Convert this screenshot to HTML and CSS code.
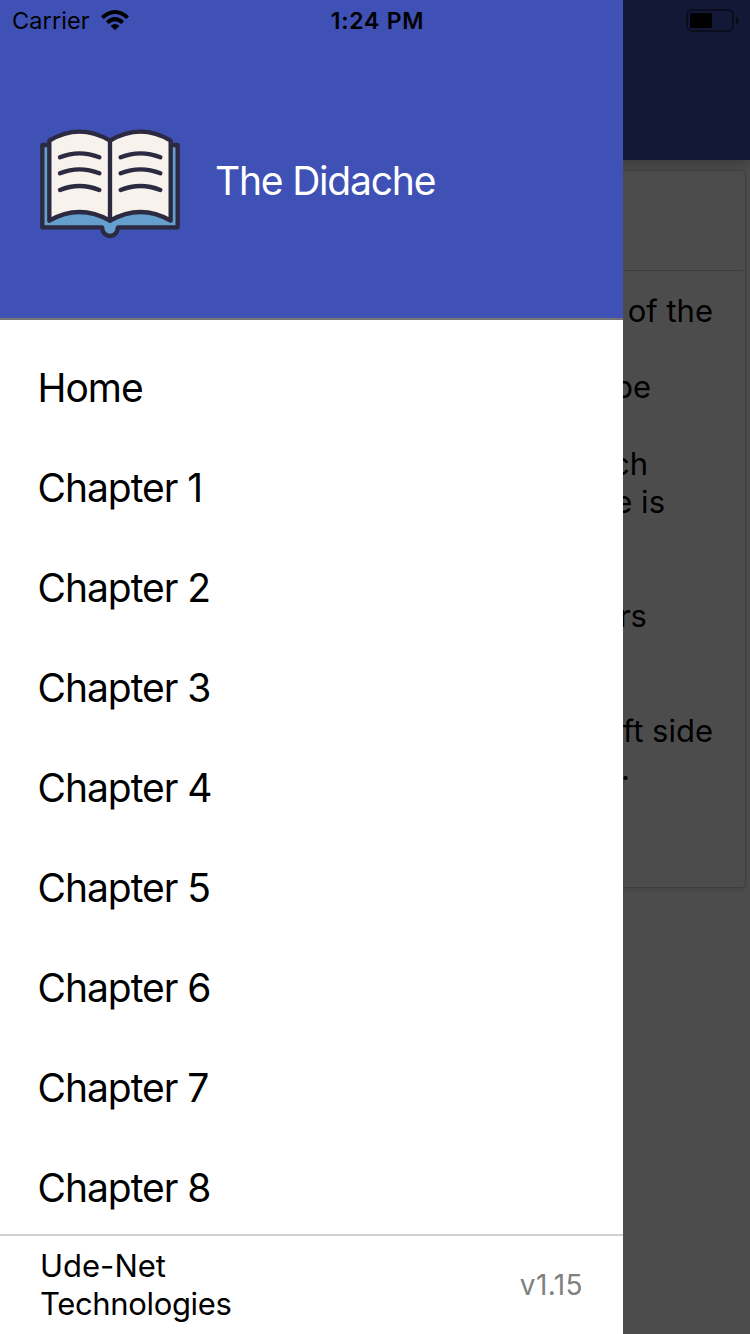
FILE: index.html
```html
<!DOCTYPE html>
<html lang="en">
<head>
<meta charset="utf-8">
<title>The Didache</title>
<link rel="stylesheet" href="styles.css">
</head>
<body>
<div class="screen">
  <main class="page">
    <div class="page-bar"></div>
    <section class="card">
      <div class="card-head"></div>
      <div class="card-body">
        <p class="line line-1">of the</p>
        <p class="line line-3">be</p>
        <p class="line line-5">ch</p>
        <p class="line line-6">e is</p>
        <p class="line line-9">rs</p>
        <p class="line line-12">ft side</p>
        <p class="line line-13">.</p>
      </div>
    </section>
  </main>
  <div class="scrim"></div>
  <aside class="drawer">
    <header class="drawer-head">
      <svg class="book" viewBox="0 0 480 375" fill="none" stroke="#2b2a41" stroke-width="13" stroke-linecap="round" stroke-linejoin="round">
        <path d="M37 75H443V322H264C262 340 253 348 240 348S218 340 216 322H37Z" fill="#659fcd"/>
        <path d="M58 62Q148 8 240 62Q332 8 422 62V302Q332 250 240 302Q148 250 58 302Z" fill="#f7f2ec"/>
        <path d="M240 62V302M90 112Q148 88 208 112M90 160Q148 136 208 160M90 210Q148 186 208 210M272 112Q332 88 391 112M272 160Q332 136 391 160M272 210Q332 186 391 210"/>
      </svg>
      <h1 class="title">The Didache</h1>
    </header>
    <nav class="menu">
      <a class="item">Home</a>
      <a class="item">Chapter 1</a>
      <a class="item">Chapter 2</a>
      <a class="item">Chapter 3</a>
      <a class="item">Chapter 4</a>
      <a class="item">Chapter 5</a>
      <a class="item">Chapter 6</a>
      <a class="item">Chapter 7</a>
      <a class="item">Chapter 8</a>
    </nav>
    <footer class="drawer-foot">
      <p class="company">Ude-Net<br><span class="company-rest">Technologies</span></p>
      <span class="version">v1.15</span>
    </footer>
  </aside>
  <div class="status">
    <div class="status-left">
      <span class="carrier">Carrier</span>
      <svg class="wifi" viewBox="0 0 28 20">
        <path d="M0 6.3Q14-6.3 28 6.3L25.2 9.1Q14-.9 2.8 9.1Z"/>
        <path d="M4.9 11.2Q14 2.8 23.1 11.2L20.3 14Q14 8.4 7.7 14Z"/>
        <path d="M9.6 15.9Q14 12 18.4 15.9L14 20.2Z"/>
      </svg>
    </div>
    <span class="time">1:24 PM</span>
    <svg class="battery" viewBox="0 0 54 24">
      <rect x="1" y="1" width="46" height="21" rx="5" fill="none" stroke="#000" stroke-opacity=".45" stroke-width="2"/>
      <rect x="4" y="4" width="22" height="15" rx="1.5"/>
      <path d="M50 7.5Q53 9 53 11.5T50 15.5Z" fill-opacity=".55"/>
    </svg>
  </div>
</div>
</body>
</html>
```

FILE: styles.css
```css
* { box-sizing: border-box; }
body, h1, p { margin: 0; }
body { font-family: Inter, "Liberation Sans", sans-serif; color: #000; }

.screen { position: relative; width: 750px; height: 1334px; overflow: hidden; }

.page { height: 100%; background: #fff; }
.page-bar { height: 160px; background: #3f51b5; box-shadow: 0 2px 14px rgba(0, 0, 0, .3); }
.card {
  height: 718px;
  margin: 10px 4px 0;
  border: 1px solid #ccc;
  border-radius: 4px;
  box-shadow: 0 2px 5px rgba(0, 0, 0, .12);
}
.card-head { height: 100px; margin: 0 2px; border-bottom: 1px solid #c8c8c8; }
.card-body {
  display: grid;
  grid-template-rows: repeat(13, 38.18px);
  padding-top: 21px;
  justify-items: end;
}
.line { font-size: 31px; line-height: 38px; white-space: nowrap; }
.line-1 { grid-row: 1; margin-right: 32px; }
.line-3 { grid-row: 3; margin-right: 94px; }
.line-5 { grid-row: 5; margin-right: 97px; }
.line-6 { grid-row: 6; margin-right: 80px; }
.line-9 { grid-row: 9; margin-right: 98px; }
.line-12 { grid-row: 12; margin-right: 32px; }
.line-13 { grid-row: 13; margin-right: 115px; }

.scrim { position: absolute; inset: 0; background: rgba(0, 0, 0, .7); }

.drawer {
  position: absolute;
  inset: 0 auto 0 0;
  width: 623px;
  display: flex;
  flex-direction: column;
  background: #fff;
}
.drawer-head {
  display: flex;
  flex: none;
  height: 320px;
  padding: 120px 0 0 30px;
  background: #3f51b5;
  border-bottom: 2px solid #757575;
}
.book { width: 160px; height: 125px; }
.title {
  margin: 36px 0 0 25px;
  font-size: 39px;
  font-weight: 400;
  line-height: 50px;
  letter-spacing: -1.2px;
  color: #fff;
}
.menu { flex: 1; min-height: 0; overflow: hidden; padding-top: 18px; }
.item {
  display: block;
  height: 100px;
  padding-left: 37.5px;
  font-size: 39px;
  line-height: 100px;
  letter-spacing: -1.05px;
}
.drawer-foot {
  display: flex;
  flex: none;
  justify-content: space-between;
  height: 100px;
  padding: 11px 40px 0 40px;
  border-top: 2px solid #d0d0d0;
}
.company { font-size: 31px; line-height: 38px; }
.company-rest { letter-spacing: -.35px; }
.version { margin-top: 19px; font-size: 28px; line-height: 38px; letter-spacing: .4px; color: #808080; }

.status {
  position: absolute;
  inset: 1px 0 auto 0;
  height: 40px;
  display: grid;
  grid-template-columns: 1fr auto 1fr;
  align-items: center;
  padding: 0 10px 0 12px;
}
.status-left { display: flex; align-items: center; gap: 11px; }
.carrier { font-size: 23.5px; line-height: 40px; letter-spacing: .1px; }
.wifi { width: 28px; height: 20px; margin-top: -2px; }
.time { margin-left: 3px; font-size: 23px; font-weight: 600; line-height: 40px; letter-spacing: .75px; }
.battery { width: 54px; height: 24px; justify-self: end; }
```
